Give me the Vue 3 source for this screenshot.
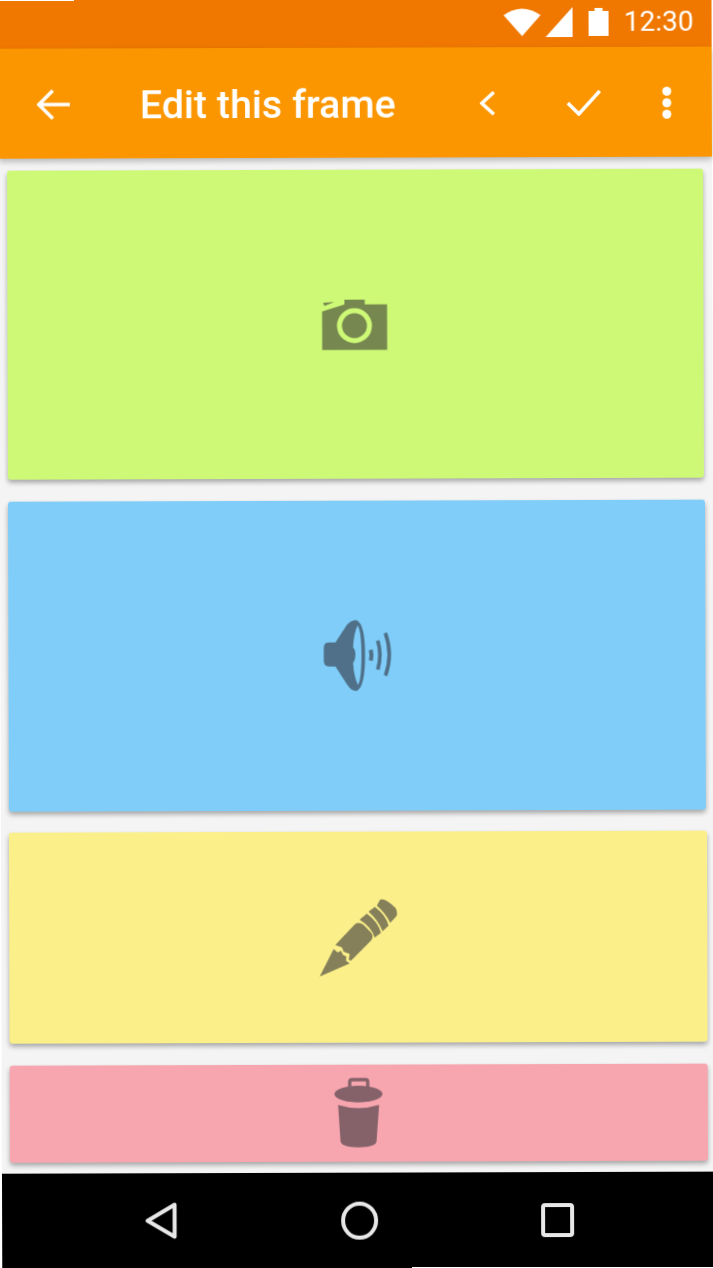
<script setup>
const title = 'Edit this frame'
const time = '12:30'
</script>

<template>
  <div class="frame">
    <div class="status">
      <svg class="wifi" width="37" height="28" viewBox="0 0 37 28"><path d="M0 7 Q18.5 -6 37 7 L18.5 28 Z" /></svg>
      <svg class="signal" width="27" height="30" viewBox="0 0 27 30"><path d="M0 30 L27 0 V30 Z" /></svg>
      <svg class="battery" width="20" height="28" viewBox="0 0 20 28"><path d="M6 0 H14 V3 H20 V28 H0 V3 H6 Z" /></svg>
      <span class="time">{{ time }}</span>
    </div>

    <div class="appbar">
      <svg class="back" width="33" height="30" viewBox="0 0 33 30"><path d="M33 15 H3 M16 1 L2 15 L16 29" /></svg>
      <h1 class="title">{{ title }}</h1>
      <svg class="prev" width="16" height="24" viewBox="0 0 16 24"><path d="M14 1 L2 12 L14 23" /></svg>
      <svg class="check" width="34" height="26" viewBox="0 0 34 26"><path d="M1 13 L12 24 L33 1" /></svg>
      <svg class="more" width="10" height="32" viewBox="0 0 10 32">
        <circle cx="5" cy="4.5" r="4.5" />
        <circle cx="5" cy="16" r="4.5" />
        <circle cx="5" cy="27.5" r="4.5" />
      </svg>
    </div>

    <div class="content">
      <div class="card green">
        <svg width="110" height="90" viewBox="3 -3 330 270">
          <path fill="#76884f" d="M68 208 V92 L135 71 V57 H196 V71 H263 V208 Z" />
          <path fill="#76884f" d="M71 66 L105 64 L75 76 Z" />
          <circle cx="165" cy="135" r="45" fill="none" stroke="#cef977" stroke-width="15" />
        </svg>
      </div>

      <div class="card blue">
        <svg width="110" height="100" viewBox="6 3 330 300">
          <path fill="#4f7088" d="M70 130 Q70 113 85 113 H105 L140 60 Q155 45 170 47 Q194 60 194 150 Q194 245 170 258 Q155 262 140 240 L105 185 H85 Q70 185 70 168 Z" />
          <path fill="#7fcdf8" d="M172 62 Q183 80 183 150 Q183 225 172 241 Q160 215 158 175 Q165 165 165 150 Q165 135 158 128 Q160 85 172 62 Z" />
          <g fill="none" stroke="#4f7088" stroke-width="11">
            <path stroke-width="12" d="M211 136 Q215 152 211 168" />
            <path d="M232 108 Q245 150 232 195" />
            <path d="M255 85 Q278 150 255 213" />
          </g>
        </svg>
      </div>

      <div class="card yellow">
        <svg width="110" height="100" viewBox="9 6 330 300">
          <g fill="#85805a">
            <path d="M58 272 L100 190 L112 200 L122 195 L128 208 L138 212 L137 225 L148 233 Z" />
            <path d="M105 178 L165 115 Q178 108 190 118 L212 140 Q222 152 212 165 L152 225 L145 222 L148 205 L130 198 L125 185 Z" />
            <path d="M178 102 L200 84 Q235 110 242 142 L223 156 Q215 125 178 102 Z" />
            <path d="M205 78 L224 64 Q258 90 265 120 L247 137 Q235 105 205 78 Z" />
            <path d="M230 60 L240 42 Q255 36 287 68 Q294 85 287 94 L270 112 Q258 85 230 60 Z" />
          </g>
        </svg>
      </div>

      <div class="card pink">
        <svg width="50" height="72" viewBox="102 51 150 216">
          <rect x="150" y="60" width="54" height="30" rx="7" fill="none" stroke="#85626a" stroke-width="10" />
          <ellipse cx="176" cy="103" rx="72" ry="25" fill="#85626a" />
          <path fill="#85626a" d="M115 136 Q176 155 238 136 L230 245 Q228 262 176 263 Q125 262 122 245 Z" />
        </svg>
      </div>
    </div>

    <div class="navbar">
      <svg width="32" height="37" viewBox="0 0 32 37"><path d="M29.5 2.5 V34.5 L2.5 18.5 Z" /></svg>
      <svg width="37" height="38" viewBox="0 0 37 38"><ellipse cx="18.5" cy="19" rx="16.5" ry="17" /></svg>
      <svg class="square" width="33" height="34" viewBox="0 0 33 34"><rect x="2" y="2" width="29" height="30" rx="2" /></svg>
    </div>
  </div>
</template>

<style scoped>
.frame {
  display: flex;
  flex-direction: column;
  width: 713px;
  height: 1268px;
  background: #f4f4f4;
  font-family: Roboto, sans-serif;
  transform-origin: 245px 0;
  transform: translateX(-1.5px) rotate(-0.17deg);
  will-change: transform;
}

.status {
  display: flex;
  align-items: center;
  justify-content: flex-end;
  flex: none;
  height: 48px;
  padding: 0 18px 3px 0;
  box-sizing: border-box;
  background: #f07800;
}

.status svg {
  fill: #fff;
}

.signal {
  margin-left: 5px;
}

.battery {
  margin-left: 16px;
}

.time {
  margin-left: 15px;
  color: #fff;
  font-size: 28px;
}

.appbar {
  position: relative;
  z-index: 1;
  display: flex;
  align-items: center;
  flex: none;
  height: 110px;
  padding: 2px 0 0 38px;
  box-sizing: border-box;
  background: #fb9600;
  box-shadow: 0 3px 6px rgba(0, 0, 0, 0.25);
}

.appbar svg {
  fill: none;
  stroke: #fff;
  stroke-width: 3.5;
}

.title {
  flex: 1;
  margin: 0 0 0 70px;
  color: #fff;
  font-size: 39.4px;
  font-weight: 500;
  white-space: nowrap;
}

.check {
  margin-left: 71px;
}

.appbar .more {
  margin: 0 40px 0 61px;
  fill: #fff;
  stroke: none;
}

.content {
  display: flex;
  flex: 1;
  flex-direction: column;
  gap: 21.5px;
  padding: 12px 7px 0 8px;
}

.card {
  display: flex;
  align-items: center;
  justify-content: center;
  border-radius: 3px;
  box-shadow: 0 3px 5px rgba(0, 0, 0, 0.32);
}

.green {
  height: 309px;
  margin-right: 2px;
  background: #cef977;
}

.blue {
  height: 310px;
  margin-right: 1px;
  background: #7fcdf8;
}

.yellow {
  height: 211px;
  background: #fbef8a;
}

.pink {
  height: 97px;
  background: #f7a5ae;
}

.navbar {
  display: flex;
  align-items: center;
  flex: none;
  gap: 164px;
  height: 95px;
  padding-left: 143px;
  box-sizing: border-box;
  background: #000;
}

.navbar svg {
  fill: none;
  stroke: #e8e8e8;
  stroke-width: 4;
  stroke-linejoin: round;
}

.navbar .square {
  margin-left: -1px;
}
</style>

<style>
html,
body {
  overflow: hidden;
  background: #fff;
}
</style>
